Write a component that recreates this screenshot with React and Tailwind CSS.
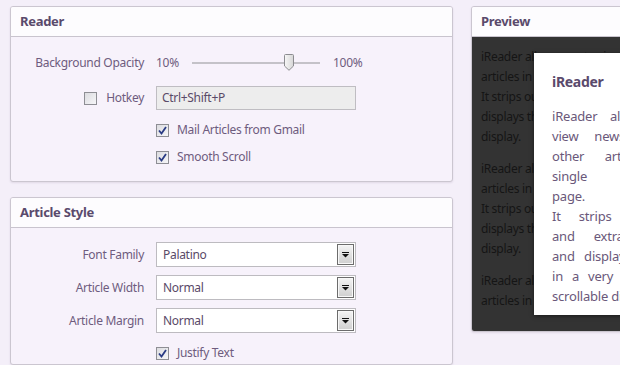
import React from 'react'

const font = { fontFamily: '"Noto Sans", "Open Sans", sans-serif' }

function Check({ checked }) {
  return (
    <span className="flex h-[13px] w-[13px] shrink-0 items-center justify-center border border-[#8e8e94] bg-gradient-to-br from-[#dcdce0] to-[#f6f6f8]">
      {checked && (
        <svg width="9" height="9" viewBox="0 0 9 9">
          <path d="M1 4.5 L3.5 7.5 L8 1" fill="none" stroke="#2a3b84" strokeWidth="1.8" />
        </svg>
      )}
    </span>
  )
}

function Panel({ title, children, className = '' }) {
  return (
    <div className={`overflow-hidden rounded-[3px] border border-[#cbc6d0] bg-[#f7f2fb] shadow-[0_1px_2px_rgba(80,60,100,0.12)] ${className}`}>
      <div className="flex h-[30px] items-center border-b border-[#c9c4ce] bg-[#fdfcfe] px-[9px] text-[13px] font-bold tracking-[-0.3px] text-[#5a4a6c]">
        {title}
      </div>
      {children}
    </div>
  )
}

function Select({ value }) {
  return (
    <div className="flex h-[25px] w-[200px] items-center justify-between border border-[#bdbbc0] bg-white pl-[6px] pr-[1px] text-[12px] text-[#5a4a68]">
      <span>{value}</span>
      <span className="flex h-[21px] w-[17px] items-center justify-center border border-[#6c6c6c] bg-gradient-to-b from-[#f4f4f4] to-[#cfcfcf] shadow-[inset_0_0_0_1px_#f8f8f8]">
        <svg width="7" height="6" viewBox="0 0 7 6">
          <rect x="0" y="0" width="7" height="1" fill="#111" />
          <path d="M0 2 H7 L3.5 5.5 Z" fill="#111" />
        </svg>
      </span>
    </div>
  )
}

function Slider() {
  return (
    <div className="relative h-[24px] w-[128px]">
      <div className="absolute left-0 right-0 top-[11px] h-[2px] bg-[#c4c2c8]" />
      <svg className="absolute left-[92px] top-[3px]" width="10" height="17" viewBox="0 0 10 17">
        <defs>
          <linearGradient id="th" x1="0" x2="1">
            <stop offset="0" stopColor="#f7f7f7" />
            <stop offset="1" stopColor="#d6d6d6" />
          </linearGradient>
        </defs>
        <path d="M0.5 1.5 Q0.5 0.5 1.5 0.5 H8.5 Q9.5 0.5 9.5 1.5 V12 L5 16.3 L0.5 12 Z" fill="url(#th)" stroke="#8c8c90" />
      </svg>
    </div>
  )
}

const bgPara = ['iReader allows you to view news and other', 'articles in a single page.', 'It strips out ads and extraneous content and', 'displays the article in a very easy to read', 'display.']

const popLines = [
  'iReader allows you to',
  'view news and blog',
  'other articles in a',
  'single readable',
  'page.',
  'It strips out clutter',
  'and extraneous stuff',
  'and displays the article',
  'in a very easy to read',
  'scrollable display.',
]

export default function App() {
  return (
    <div className="flex h-[365px] w-[620px] overflow-hidden bg-[#f4eff9]" style={font}>
      <div className="flex w-[453px] shrink-0 flex-col gap-[15px] pl-[10px] pt-[6px]">
        <Panel title="Reader">
          <div className="flex flex-col pb-[12px] pt-[14px] text-[12px] tracking-[-0.3px] text-[#6e5c7e]">
            <div className="flex h-[24px] items-center">
              <span className="w-[133px] text-right">Background Opacity</span>
              <span className="ml-[12px] w-[36px]">10%</span>
              <Slider />
              <span className="ml-[13px]">100%</span>
            </div>
            <div className="mt-[11px] flex h-[24px] items-center">
              <span className="flex w-[133px] items-center justify-end gap-[9px]">
                <Check />
                <span>Hotkey</span>
              </span>
              <div className="ml-[12px] flex h-[24px] w-[200px] items-center border border-[#bfbdc2] bg-[#ededed] px-[5px] text-[#5a4a68]">
                Ctrl+Shift+P
              </div>
            </div>
            <div className="mt-[8px] flex h-[24px] items-center gap-[8px] pl-[145px]">
              <Check checked />
              <span>Mail Articles from Gmail</span>
            </div>
            <div className="mt-[3px] flex h-[24px] items-center gap-[8px] pl-[145px]">
              <Check checked />
              <span>Smooth Scroll</span>
            </div>
          </div>
        </Panel>
        <Panel title="Article Style" className="flex-1">
          <div className="flex flex-col gap-[8px] pt-[14px] text-[12px] tracking-[-0.3px] text-[#6e5c7e]">
            {[
              ['Font Family', 'Palatino'],
              ['Article Width', 'Normal'],
              ['Article Margin', 'Normal'],
            ].map(([label, value]) => (
              <div key={label} className="flex items-center">
                <span className="w-[133px] text-right">{label}</span>
                <span className="ml-[12px]">
                  <Select value={value} />
                </span>
              </div>
            ))}
            <div className="flex h-[24px] items-center gap-[8px] pl-[145px]">
              <Check checked />
              <span>Justify Text</span>
            </div>
          </div>
        </Panel>
      </div>
      <div className="ml-[18px] w-[190px] shrink-0 pt-[6px]">
        <Panel title="Preview" className="h-[326px] bg-[#333333]">
          <div className="relative h-[295px] overflow-hidden bg-[#333333]">
            <div className="flex flex-col gap-[12px] whitespace-nowrap px-[9px] pt-[10px] text-[12px] leading-[20px] tracking-[-0.3px] text-[#151515]">
              {[5, 5, 2].map((n, i) => (
                <div key={i}>
                  {bgPara.slice(0, n).map((l) => (
                    <div key={l}>{l}</div>
                  ))}
                </div>
              ))}
            </div>
            <div className="absolute left-[62px] top-[16px] h-[262px] w-[190px] bg-white px-[18px] pt-[18px] shadow-[0_1px_4px_rgba(0,0,0,0.5)]">
              <div className="text-[14px] font-bold tracking-[-0.3px] text-[#5a4a6c]">iReader</div>
              <div className="mt-[14px] whitespace-nowrap text-[13px] leading-[20px] tracking-[-0.2px] text-[#6a587a]">
                {popLines.map((l, i) => (
                  <div key={i} className={i === 4 || i === 9 ? '' : 'text-justify [text-align-last:justify]'}>
                    {l}
                  </div>
                ))}
              </div>
            </div>
          </div>
        </Panel>
      </div>
    </div>
  )
}
